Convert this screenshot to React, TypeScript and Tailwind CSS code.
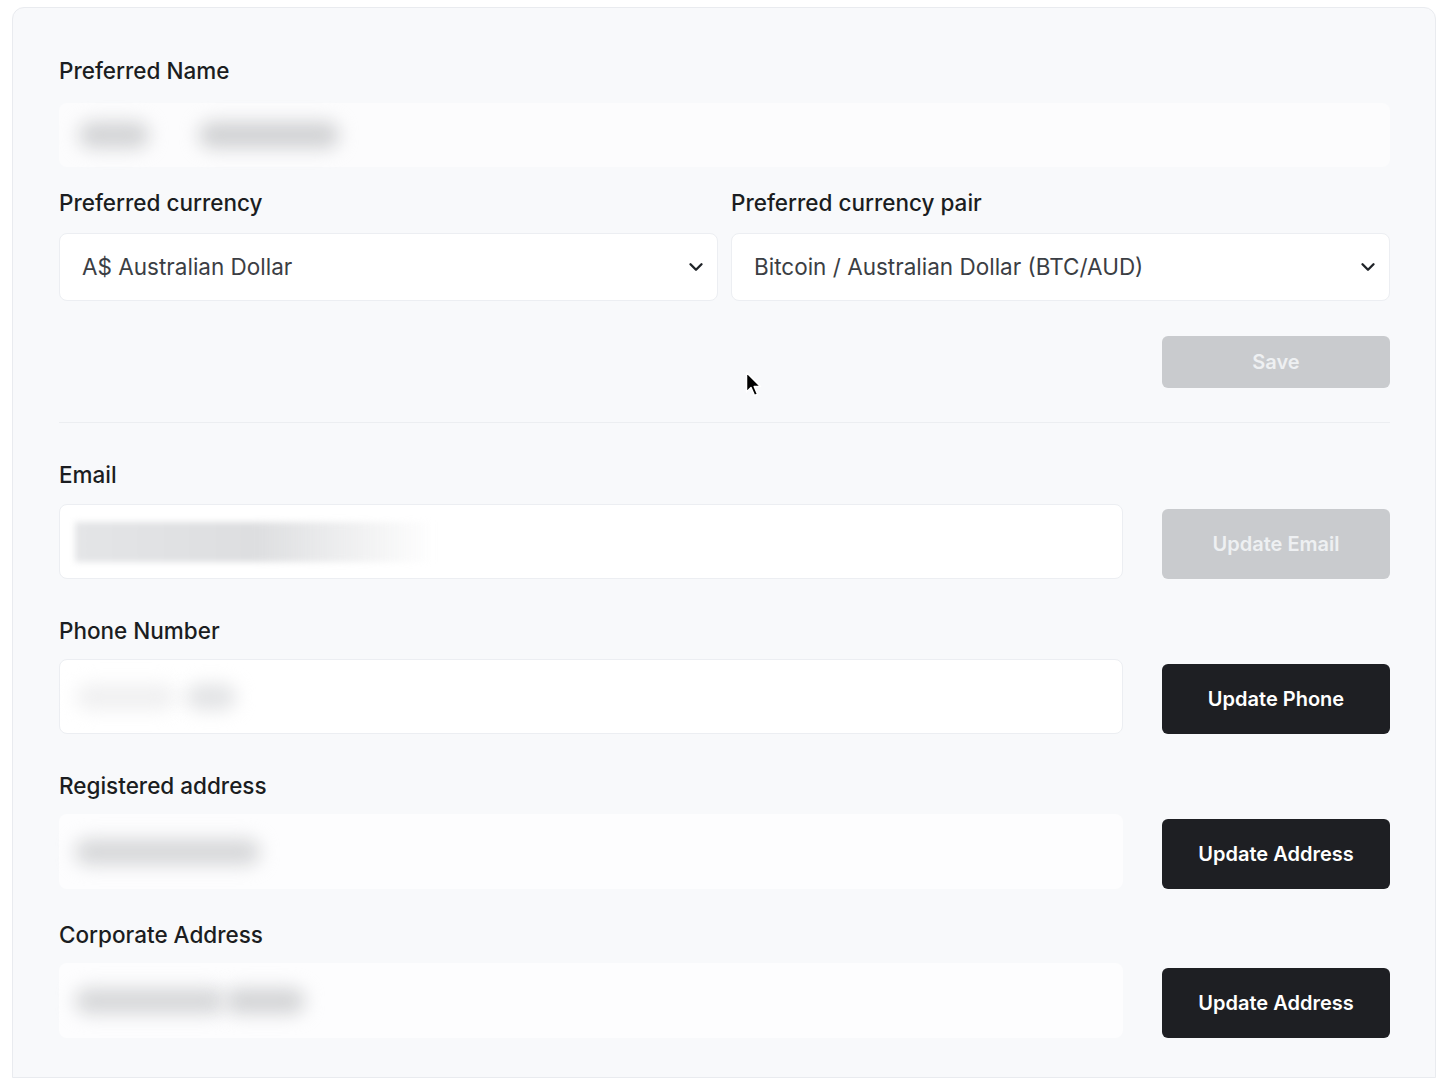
import React from 'react';

// Campo com conteúdo borrado (dados pessoais ocultos)
function Borrado({ blobs }: { blobs: { w: number; ml: number; tom: string }[] }) {
  return (
    <div className="flex items-center h-full pl-[16px]">
      {blobs.map((b, i) => (
        <div
          key={i}
          className={`h-[26px] rounded-full blur-[9px] ${b.tom}`}
          style={{ width: b.w, marginLeft: b.ml }}
        />
      ))}
    </div>
  );
}

function Chevron() {
  return (
    <svg width="22" height="22" viewBox="0 0 24 24" fill="none" stroke="#1f2328" strokeWidth="2.6" strokeLinecap="round" strokeLinejoin="round">
      <path d="M6 9l6 6 6-6" />
    </svg>
  );
}

function Select({ valor }: { valor: string }) {
  return (
    <div className="flex-1 h-[68px] rounded-lg bg-white border border-[#eceef2] flex items-center justify-between pl-[22px] pr-[10px]">
      <span className="text-[22.5px] text-[#3b3e44]">{valor}</span>
      <Chevron />
    </div>
  );
}

function Botao({ texto, desativado }: { texto: string; desativado?: boolean }) {
  return (
    <button
      className={`w-[228px] h-[70px] rounded-md text-[20px] font-semibold shrink-0 ${
        desativado ? 'bg-[#c9cbce] text-[#eef0f2]' : 'bg-[#1e1f23] text-white'
      }`}
    >
      {texto}
    </button>
  );
}

function Rotulo({ children }: { children: React.ReactNode }) {
  return <div className="text-[22.5px] leading-[28px] font-medium text-[#1b1d21]">{children}</div>;
}

export default function App() {
  return (
    <div className="min-h-screen bg-white pt-[7px] pl-[12px] pr-[12px]" style={{ fontFamily: 'Inter, "Noto Sans", sans-serif' }}>
      <div className="relative h-[1071px] rounded-t-xl border border-[#e9ebef] bg-[#f8f9fb] pl-[46px] pr-[45px] pt-[49px]">
        {/* Nome preferido */}
        <Rotulo>Preferred Name</Rotulo>
        <div className="mt-[18px] h-[64px] rounded-lg bg-[#fcfcfd]">
          <Borrado blobs={[{ w: 70, ml: 4, tom: 'bg-[#d2d3d5]' }, { w: 140, ml: 50, tom: 'bg-[#d0d1d3]' }]} />
        </div>

        {/* Moedas */}
        <div className="mt-[22px] flex gap-[13px]">
          <div className="flex-1">
            <Rotulo>Preferred currency</Rotulo>
            <div className="mt-[16px] flex">
              <Select valor="A$ Australian Dollar" />
            </div>
          </div>
          <div className="flex-1">
            <Rotulo>Preferred currency pair</Rotulo>
            <div className="mt-[16px] flex">
              <Select valor="Bitcoin / Australian Dollar (BTC/AUD)" />
            </div>
          </div>
        </div>

        <div className="mt-[35px] flex justify-end">
          <button className="w-[228px] h-[52px] rounded-md bg-[#c9cbce] text-[#eef0f2] text-[20px] font-semibold">Save</button>
        </div>

        <div className="mt-[34px] h-px bg-[#eceef1]" />

        {/* Email */}
        <div className="mt-[38px]">
          <Rotulo>Email</Rotulo>
          <div className="mt-[15px] flex items-end gap-[39px]">
            <div className="flex-1 h-[75px] rounded-lg bg-white border border-[#eceef2] flex items-center pl-[15px]">
              <div className="h-[40px] w-[360px] bg-gradient-to-r from-[#e4e5e7] via-[#dddee0] to-transparent blur-[3px]" />
            </div>
            <Botao texto="Update Email" desativado />
          </div>
        </div>

        {/* Telefone */}
        <div className="mt-[38px]">
          <Rotulo>Phone Number</Rotulo>
          <div className="mt-[14px] flex items-end gap-[39px]">
            <div className="flex-1 h-[75px] rounded-lg bg-white border border-[#eceef2]">
              <Borrado blobs={[{ w: 100, ml: 0, tom: 'bg-[#f0f0f1]' }, { w: 50, ml: 10, tom: 'bg-[#e2e3e5]' }]} />
            </div>
            <Botao texto="Update Phone" />
          </div>
        </div>

        {/* Endereço registrado */}
        <div className="mt-[38px]">
          <Rotulo>Registered address</Rotulo>
          <div className="mt-[14px] flex items-end gap-[39px]">
            <div className="flex-1 h-[75px] rounded-lg bg-[#fdfdfe]">
              <Borrado blobs={[{ w: 185, ml: 0, tom: 'bg-[#d6d7d9]' }]} />
            </div>
            <Botao texto="Update Address" />
          </div>
        </div>

        {/* Endereço corporativo */}
        <div className="mt-[32px]">
          <Rotulo>Corporate Address</Rotulo>
          <div className="mt-[14px] flex items-end gap-[39px]">
            <div className="flex-1 h-[75px] rounded-lg bg-[#fdfdfe]">
              <Borrado blobs={[{ w: 150, ml: 0, tom: 'bg-[#d6d7d9]' }, { w: 80, ml: 0, tom: 'bg-[#d3d4d6]' }]} />
            </div>
            <Botao texto="Update Address" />
          </div>
        </div>

        {/* Cursor do mouse */}
        <svg className="absolute left-[732px] top-[363px]" width="20" height="28" viewBox="0 0 20 28">
          <path d="M1.5 1.5 L1.5 21 L6 16.5 L9.5 24.5 L12.5 23.2 L9.2 15.5 L15.5 15.5 Z" fill="#000" stroke="#fff" strokeWidth="1.5" strokeLinejoin="round" />
        </svg>
      </div>
    </div>
  );
}
